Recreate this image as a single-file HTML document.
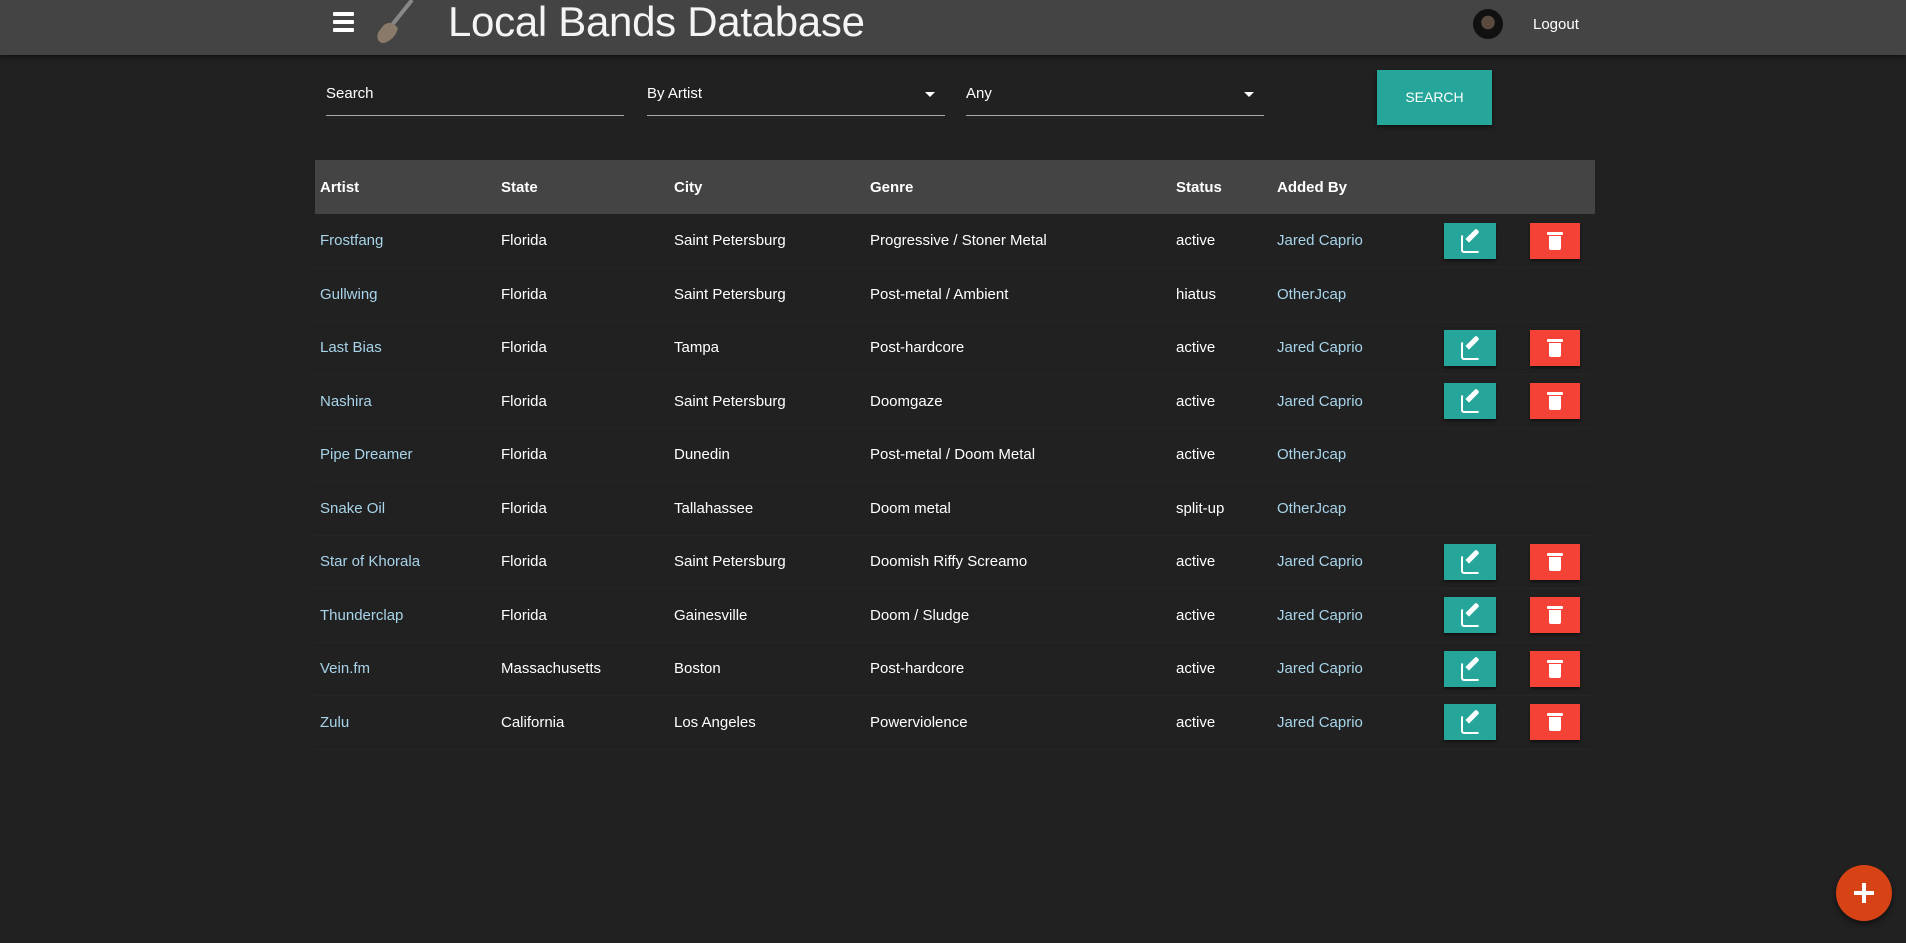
<!DOCTYPE html>
<html><head><meta charset="utf-8"><style>
*{margin:0;padding:0;box-sizing:border-box}
body{width:1906px;height:943px;background:#212121;font-family:"Liberation Sans",sans-serif;color:#fff;position:relative;overflow:hidden;font-size:15px}
.hdr{position:absolute;left:0;top:0;width:1906px;height:55px;background:#444;box-shadow:0 2px 5px rgba(0,0,0,.5)}
.ham{position:absolute;left:333px;top:12px;width:21px}
.ham i{display:block;height:4px;background:#fff;margin-bottom:4px;border-radius:1px}
.title{position:absolute;left:448px;top:-2px;font-size:42px;color:#f4f4f4;letter-spacing:-0.3px}
.av{position:absolute;left:1473px;top:9px;width:30px;height:30px;border-radius:50%;background:radial-gradient(circle at 50% 45%,#5a4a40 0 30%,#111 31%)}
.lo{position:absolute;left:1533px;top:16px;font-size:15px}
.f{position:absolute;top:70px;height:46px;border-bottom:1px solid #aaa;font-size:15px;padding-top:15px}
.arr{position:absolute;right:10px;top:22px;border-left:5px solid transparent;border-right:5px solid transparent;border-top:5px solid #fff}
.btn{position:absolute;left:1377px;top:70px;width:115px;height:55px;background:#26a69a;color:#fff;font-size:14px;text-align:center;line-height:55px;box-shadow:0 2px 4px rgba(0,0,0,.5)}
table{position:absolute;left:315px;top:160px;width:1280px;border-collapse:collapse}
th{background:#444;height:54px;text-align:left;font-weight:bold;font-size:15px;padding-left:5px}
td{height:53.5px;padding-left:5px;border-bottom:1px solid #262626;font-size:15px}
td a{color:#a8d4ea}
.e,.d{display:inline-block;width:52px;height:36px;vertical-align:middle;box-shadow:0 2px 3px rgba(0,0,0,.5);position:relative}
.d{width:50px}
.e{background:#26a69a}.d{background:#f44336}
.fab{position:absolute;left:1836px;top:865px;width:56px;height:56px;border-radius:50%;background:#d84315;box-shadow:0 3px 6px rgba(0,0,0,.5)}
</style></head><body>
<div class="hdr">
<div class="ham"><i></i><i></i><i></i></div>
<svg style="position:absolute;left:372px;top:0" width="52" height="46" viewBox="0 0 52 46"><path d="M40 0 L20 25" stroke="#888" stroke-width="4"/><path d="M8 30 Q14 20 22 24 L26 28 Q24 36 18 40 Q10 46 6 40 Q4 34 8 30Z" fill="#8a7a6a"/></svg>
<div class="title">Local Bands Database</div>
<div class="av"></div>
<div class="lo">Logout</div>
</div>
<div class="f" style="left:326px;width:298px">Search</div>
<div class="f" style="left:647px;width:298px">By Artist<span class="arr"></span></div>
<div class="f" style="left:966px;width:298px">Any<span class="arr"></span></div>
<div class="btn">SEARCH</div>
<table>
<tr><th style="width:181px">Artist</th><th style="width:173px">State</th><th style="width:196px">City</th><th style="width:306px">Genre</th><th style="width:101px">Status</th><th style="width:167px">Added By</th><th style="width:86px"></th><th></th></tr>
<tr><td><a>Frostfang</a></td><td>Florida</td><td>Saint Petersburg</td><td>Progressive / Stoner Metal</td><td>active</td><td><a>Jared Caprio</a></td><td><span class="e"></span></td><td><span class="d"></span></td></tr>
<tr><td><a>Gullwing</a></td><td>Florida</td><td>Saint Petersburg</td><td>Post-metal / Ambient</td><td>hiatus</td><td><a>OtherJcap</a></td><td></td><td></td></tr>
<tr><td><a>Last Bias</a></td><td>Florida</td><td>Tampa</td><td>Post-hardcore</td><td>active</td><td><a>Jared Caprio</a></td><td><span class="e"></span></td><td><span class="d"></span></td></tr>
<tr><td><a>Nashira</a></td><td>Florida</td><td>Saint Petersburg</td><td>Doomgaze</td><td>active</td><td><a>Jared Caprio</a></td><td><span class="e"></span></td><td><span class="d"></span></td></tr>
<tr><td><a>Pipe Dreamer</a></td><td>Florida</td><td>Dunedin</td><td>Post-metal / Doom Metal</td><td>active</td><td><a>OtherJcap</a></td><td></td><td></td></tr>
<tr><td><a>Snake Oil</a></td><td>Florida</td><td>Tallahassee</td><td>Doom metal</td><td>split-up</td><td><a>OtherJcap</a></td><td></td><td></td></tr>
<tr><td><a>Star of Khorala</a></td><td>Florida</td><td>Saint Petersburg</td><td>Doomish Riffy Screamo</td><td>active</td><td><a>Jared Caprio</a></td><td><span class="e"></span></td><td><span class="d"></span></td></tr>
<tr><td><a>Thunderclap</a></td><td>Florida</td><td>Gainesville</td><td>Doom / Sludge</td><td>active</td><td><a>Jared Caprio</a></td><td><span class="e"></span></td><td><span class="d"></span></td></tr>
<tr><td><a>Vein.fm</a></td><td>Massachusetts</td><td>Boston</td><td>Post-hardcore</td><td>active</td><td><a>Jared Caprio</a></td><td><span class="e"></span></td><td><span class="d"></span></td></tr>
<tr><td><a>Zulu</a></td><td>California</td><td>Los Angeles</td><td>Powerviolence</td><td>active</td><td><a>Jared Caprio</a></td><td><span class="e"></span></td><td><span class="d"></span></td></tr>
</table>
<div class="fab"><svg width="56" height="56"><path d="M28 18V38M18 28H38" stroke="#fff" stroke-width="4"/></svg></div>
<style>
.e::after{content:"";position:absolute;left:17px;top:11px;width:15px;height:15px;border:2.5px solid #fff;border-radius:3px;border-top-color:transparent;border-right-color:transparent}
.e::before{content:"";position:absolute;left:26px;top:5px;width:5px;height:15px;background:#fff;transform:rotate(45deg);border-radius:2px 2px 0 0}
.d::after{content:"";position:absolute;left:19px;top:13px;width:12px;height:14px;background:#fff;border-radius:0 0 2px 2px}
.d::before{content:"";position:absolute;left:17px;top:9px;width:16px;height:3px;background:#fff;border-radius:1px}
</style>
</body></html>
